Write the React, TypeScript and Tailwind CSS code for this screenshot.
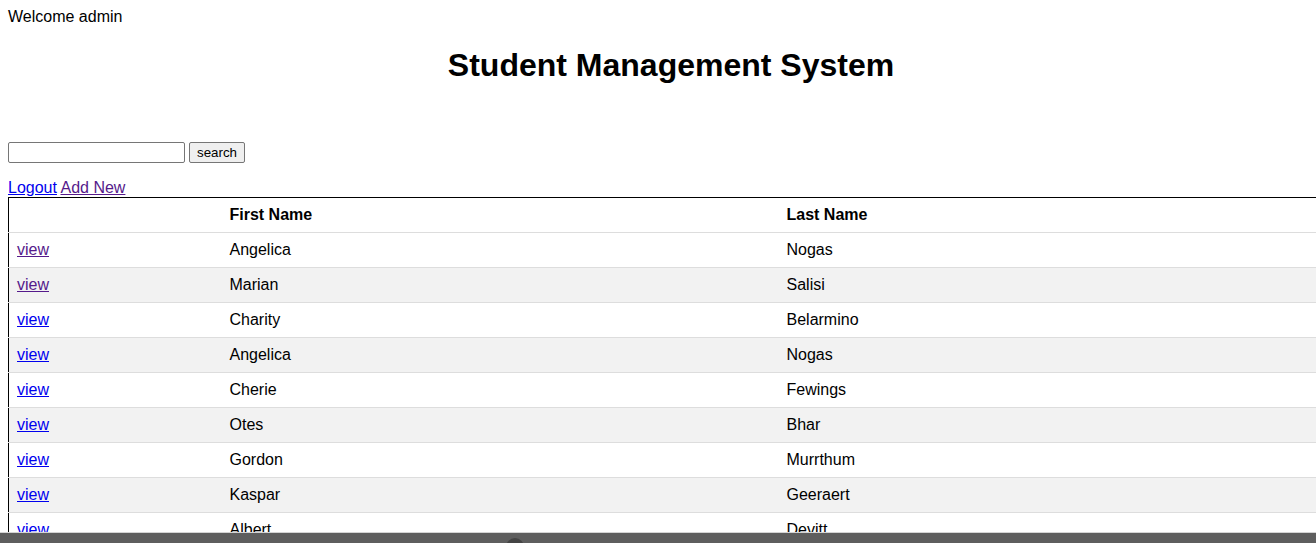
const students = [
  { first: 'Angelica', last: 'Nogas', visited: true },
  { first: 'Marian', last: 'Salisi', visited: true },
  { first: 'Charity', last: 'Belarmino', visited: false },
  { first: 'Angelica', last: 'Nogas', visited: false },
  { first: 'Cherie', last: 'Fewings', visited: false },
  { first: 'Otes', last: 'Bhar', visited: false },
  { first: 'Gordon', last: 'Murrthum', visited: false },
  { first: 'Kaspar', last: 'Geeraert', visited: false },
  { first: 'Albert', last: 'Devitt', visited: false },
  { first: 'Ricky', last: 'Bowe', visited: false },
];

export default function App() {
  return (
    <div className="relative h-screen overflow-hidden bg-white text-black font-['Liberation_Sans',Arial,sans-serif] text-[16px]">
      <div className="w-[1342px] p-2">
        <div className="leading-[18px]">Welcome admin</div>
        <h1 className="mt-[21px] mb-[58px] text-center text-[32px] font-bold leading-[37px]">
          Student Management System
        </h1>

        <form className="flex h-[21px] items-center gap-1" onSubmit={e => e.preventDefault()}>
          <input
            type="text"
            className="h-[21px] w-[177px] rounded-[2px] border border-[#767676] bg-white px-[2px] text-[13.33px]"
          />
          <button
            type="submit"
            className="h-[21px] w-[56px] rounded-[2px] border border-[#767676] bg-[#efefef] text-[13.33px] leading-none text-black"
          >
            search
          </button>
        </form>

        <div className="mt-4 leading-[18px]">
          <a href="#" className="text-[#0000ee] underline">Logout</a>{' '}
          <a href="#" className="text-[#551a8b] underline">Add New</a>
        </div>

        <table className="w-full table-fixed border-collapse border border-black text-left">
          <thead>
            <tr className="border-b border-[#dddddd]">
              <th className="w-[213px] p-2 leading-[18px]"></th>
              <th className="w-[557px] p-2 leading-[18px] font-bold">First Name</th>
              <th className="p-2 leading-[18px] font-bold">Last Name</th>
            </tr>
          </thead>
          <tbody>
            {students.map((s, i) => (
              <tr key={i} className={`border-b border-[#dddddd] ${i % 2 === 1 ? 'bg-[#f2f2f2]' : 'bg-white'}`}>
                <td className="p-2 leading-[18px]">
                  <a href="#" className={`underline ${s.visited ? 'text-[#551a8b]' : 'text-[#0000ee]'}`}>view</a>
                </td>
                <td className="p-2 leading-[18px]">{s.first}</td>
                <td className="p-2 leading-[18px]">{s.last}</td>
              </tr>
            ))}
          </tbody>
        </table>
      </div>

      {/* bottom overlay bar */}
      <div className="absolute bottom-0 left-0 right-0 h-[11px] overflow-hidden border-t border-[#d4d4d4] bg-[#5e5e5e]">
        <div className="absolute left-[506px] top-[5px] h-[18px] w-[18px] rounded-full bg-[#444444]"></div>
      </div>
    </div>
  );
}
